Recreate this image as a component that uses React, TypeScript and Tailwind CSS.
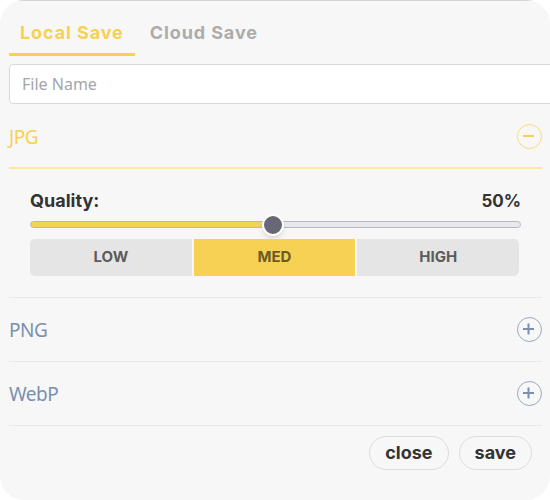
import { useState } from "react";

const LEVELS = [
  { label: "LOW", value: 25 },
  { label: "MED", value: 50 },
  { label: "HIGH", value: 100 },
];

function ToggleIcon({ open }: { open: boolean }) {
  return (
    <svg
      className="mb-[2px]"
      width="25"
      height="25"
      viewBox="0 0 25 25"
      fill="none"
      stroke="currentColor"
      aria-hidden="true"
    >
      <circle cx="12.5" cy="12.5" r="12" strokeWidth="1" opacity="0.75" />
      <path d={open ? "M6 12H17" : "M6 12H17M11.5 6.5V17.5"} strokeWidth="2" />
    </svg>
  );
}

function FormatHeader({ name, open = false }: { name: string; open?: boolean }) {
  return (
    <button
      type="button"
      aria-expanded={open}
      className={`flex h-16 w-full items-center justify-between pt-[2px] font-['Noto_Sans',sans-serif] text-[19px] tracking-tight ${
        open ? "border-b-2 border-[#fbe6a4] text-[#f7d154]" : "border-b border-[#e9e9e9] text-[#7a90ad]"
      }`}
    >
      <span>{name}</span>
      <ToggleIcon open={open} />
    </button>
  );
}

function QualityPanel() {
  const [quality, setQuality] = useState(50);
  return (
    <div className="flex flex-col border-b border-[#e9e9e9] px-[21px] pt-5 pb-[21px]">
      <div className="flex h-6 items-center justify-between text-lg font-bold text-[#333]">
        <label htmlFor="quality">Quality:</label>
        <output htmlFor="quality" className="text-[17px]">
          {quality}%
        </output>
      </div>
      <input
        id="quality"
        type="range"
        min={1}
        max={100}
        value={quality}
        onChange={(e) => setQuality(Number(e.target.value))}
        style={{
          backgroundImage: `linear-gradient(to right, #f7d154 ${quality}%, #e9e9ed ${quality}%)`,
        }}
        className="my-2 h-[7px] w-full appearance-none rounded-full border border-[#b9b7bd] [&::-webkit-slider-thumb]:size-[22px] [&::-webkit-slider-thumb]:appearance-none [&::-webkit-slider-thumb]:rounded-full [&::-webkit-slider-thumb]:border-2 [&::-webkit-slider-thumb]:border-white [&::-webkit-slider-thumb]:bg-[#686775] [&::-webkit-slider-thumb]:shadow-md"
      />
      <div className="mt-[3px] mr-[2px] grid h-[37px] grid-cols-3 gap-[2px] overflow-hidden rounded-[5px]">
        {LEVELS.map((level) => (
          <button
            key={level.label}
            type="button"
            onClick={() => setQuality(level.value)}
            className={`text-[15px] font-bold ${
              quality === level.value ? "bg-[#f7d154] text-[#6b5b25]" : "bg-[#e5e5e5] text-[#5c5c5c]"
            }`}
          >
            {level.label}
          </button>
        ))}
      </div>
    </div>
  );
}

export default function App() {
  return (
    <main className="flex min-h-screen flex-col overflow-hidden rounded-[24px] bg-[#f7f7f7] pr-2 pl-[9px] font-['Inter','Liberation_Sans',sans-serif]">
      <div className="-mx-[9px] h-px bg-[#d4d4d4]" />
      <div role="tablist" className="flex h-[55px] items-stretch gap-1 text-lg font-bold tracking-wider">
        <button
          role="tab"
          type="button"
          aria-selected="true"
          className="border-b-3 border-[#f7d154] px-[11px] pt-3 text-[#f7d154]"
        >
          Local Save
        </button>
        <button
          role="tab"
          type="button"
          aria-selected="false"
          className="border-b-3 border-transparent px-[11px] pt-3 text-[#acacac]"
        >
          Cloud Save
        </button>
      </div>
      <input
        type="text"
        aria-label="File Name"
        placeholder="File Name"
        className="mt-2 -mr-6 h-10 rounded-[4px] border border-[#d7dbe0] bg-white px-3 font-['Noto_Sans',sans-serif] text-base text-[#333] placeholder:text-[#a3a6aa]"
      />
      <div className="h-px" />
      <FormatHeader name="JPG" open />
      <QualityPanel />
      <FormatHeader name="PNG" />
      <FormatHeader name="WebP" />
      <div className="flex justify-end gap-[10px] pt-[10px] pr-[10px] text-lg font-bold text-[#333]">
        <button type="button" className="h-[34px] rounded-full border border-[#dcdcdc] px-[15px]">
          close
        </button>
        <button type="button" className="h-[34px] rounded-full border border-[#dcdcdc] px-[15px]">
          save
        </button>
      </div>
    </main>
  );
}
